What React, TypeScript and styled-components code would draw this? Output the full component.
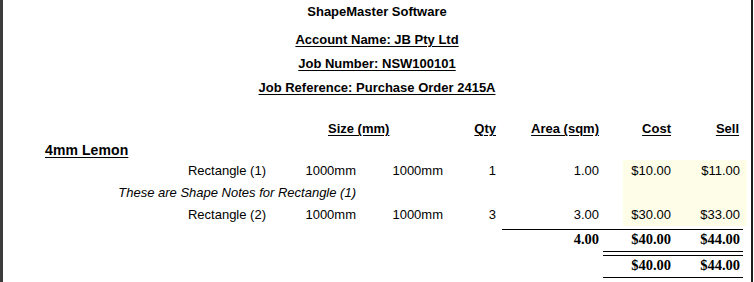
import React from 'react';
import styled, { createGlobalStyle } from 'styled-components';

const GlobalStyle = createGlobalStyle`
  html, body {
    margin: 0;
    padding: 0;
    background: #ffffff;
  }
`;

const Report = styled.div`
  width: 748px;
  height: 282px;
  border-left: 3px solid #3c3c3c;
  border-right: 2px solid #1e1e1e;
  background: #ffffff;
  color: #000000;
  overflow: hidden;
`;

const Header = styled.header`
  display: flex;
  flex-direction: column;
  align-items: center;
`;

const Title = styled.div`
  font: bold 13px 'Liberation Sans', Arial, sans-serif;
  line-height: 24px;
  margin-bottom: 4px;
`;

const HeadLine = styled.div`
  font: bold 13px 'Liberation Sans', Arial, sans-serif;
  line-height: 24px;
  text-decoration: underline;
  text-underline-offset: 2px;
`;

const Grid = styled.div`
  display: grid;
  grid-template-columns: 263px 90px 87px 53px 103px 24px 48px 76px;
  margin-top: 17px;
`;

const ColHead = styled.div<{ $col: string; $pad?: number; $left?: boolean }>`
  grid-column: ${p => p.$col};
  font: bold 13px 'Liberation Sans', Arial, sans-serif;
  line-height: 24px;
  text-align: ${p => (p.$left ? 'left' : 'right')};
  padding-left: ${p => (p.$left ? p.$pad ?? 0 : 0)}px;
  padding-right: ${p => (p.$left ? 0 : p.$pad ?? 0)}px;
  text-decoration: underline;
  text-underline-offset: 2px;
`;

const Section = styled.div`
  grid-column: 1 / -1;
  padding-left: 42px;
  font: bold 14px 'Liberation Sans', Arial, sans-serif;
  line-height: 19px;
  letter-spacing: 0.1px;
  text-decoration: underline;
  text-underline-offset: 2px;
`;

const Cell = styled.div<{ $col?: string; $shade?: boolean; $pad?: number }>`
  grid-column: ${p => p.$col ?? 'auto'};
  font: 13px 'Liberation Sans', Arial, sans-serif;
  line-height: 22px;
  text-align: right;
  white-space: nowrap;
  padding-right: ${p => p.$pad ?? 0}px;
  background: ${p => (p.$shade ? '#fefde8' : 'transparent')};
`;

const Note = styled(Cell)`
  font-style: italic;
`;

const Total = styled.div<{ $col: string; $pad?: number }>`
  grid-column: ${p => p.$col};
  font: bold 14.5px 'Liberation Serif', 'Times New Roman', serif;
  line-height: 19px;
  text-align: right;
  padding-right: ${p => p.$pad ?? 0}px;
`;

const Rule = styled.div<{ $col: string; $from: number; $gap: number; $double?: boolean }>`
  grid-column: ${p => p.$col};
  margin: ${p => p.$gap}px 4px 0 ${p => p.$from}px;
  height: ${p => (p.$double ? 3 : 0)}px;
  border-top: 1px solid #000;
  border-bottom: ${p => (p.$double ? '1px solid #000' : 'none')};
`;

type Item = { name: string; w: string; h: string; qty: number; area: string; cost: string; sell: string; note?: string };

const items: Item[] = [
  { name: 'Rectangle (1)', w: '1000mm', h: '1000mm', qty: 1, area: '1.00', cost: '$10.00', sell: '$11.00', note: 'These are Shape Notes for Rectangle (1)' },
  { name: 'Rectangle (2)', w: '1000mm', h: '1000mm', qty: 3, area: '3.00', cost: '$30.00', sell: '$33.00' },
];

const ItemRow: React.FC<{ item: Item }> = ({ item }) => (
  <>
    <Cell $col="1">{item.name}</Cell>
    <Cell $col="2">{item.w}</Cell>
    <Cell $col="3">{item.h}</Cell>
    <Cell $col="4">{item.qty}</Cell>
    <Cell $col="5">{item.area}</Cell>
    <Cell $col="7" $shade>{item.cost}</Cell>
    <Cell $col="8" $shade $pad={7}>{item.sell}</Cell>
    {item.note && (
      <>
        <Note $col="1 / 3">{item.note}</Note>
        <Cell $col="7" $shade />
        <Cell $col="8" $shade />
      </>
    )}
  </>
);

export default function App() {
  return (
    <>
      <GlobalStyle />
      <Report>
        <Header>
          <Title>ShapeMaster Software</Title>
          <HeadLine>Account Name: JB Pty Ltd</HeadLine>
          <HeadLine>Job Number: NSW100101</HeadLine>
          <HeadLine>Job Reference: Purchase Order 2415A</HeadLine>
        </Header>
        <Grid>
          <ColHead $col="2 / 4" $left $pad={62}>Size (mm)</ColHead>
          <ColHead $col="4" $pad={-2}>Qty</ColHead>
          <ColHead $col="5" $pad={-1}>Area (sqm)</ColHead>
          <ColHead $col="7">Cost</ColHead>
          <ColHead $col="8" $pad={8}>Sell</ColHead>
          <Section>4mm Lemon</Section>
          {items.map(it => <ItemRow key={it.name} item={it} />)}
          <Rule $col="5 / -1" $from={6} $gap={3} />
          <Total $col="5">4.00</Total>
          <Total $col="7">$40.00</Total>
          <Total $col="8" $pad={7}>$44.00</Total>
          <Rule $col="6 / -1" $from={4} $gap={2} $double />
          <Total $col="7">$40.00</Total>
          <Total $col="8" $pad={7}>$44.00</Total>
          <Rule $col="6 / -1" $from={4} $gap={2} />
        </Grid>
      </Report>
    </>
  );
}
